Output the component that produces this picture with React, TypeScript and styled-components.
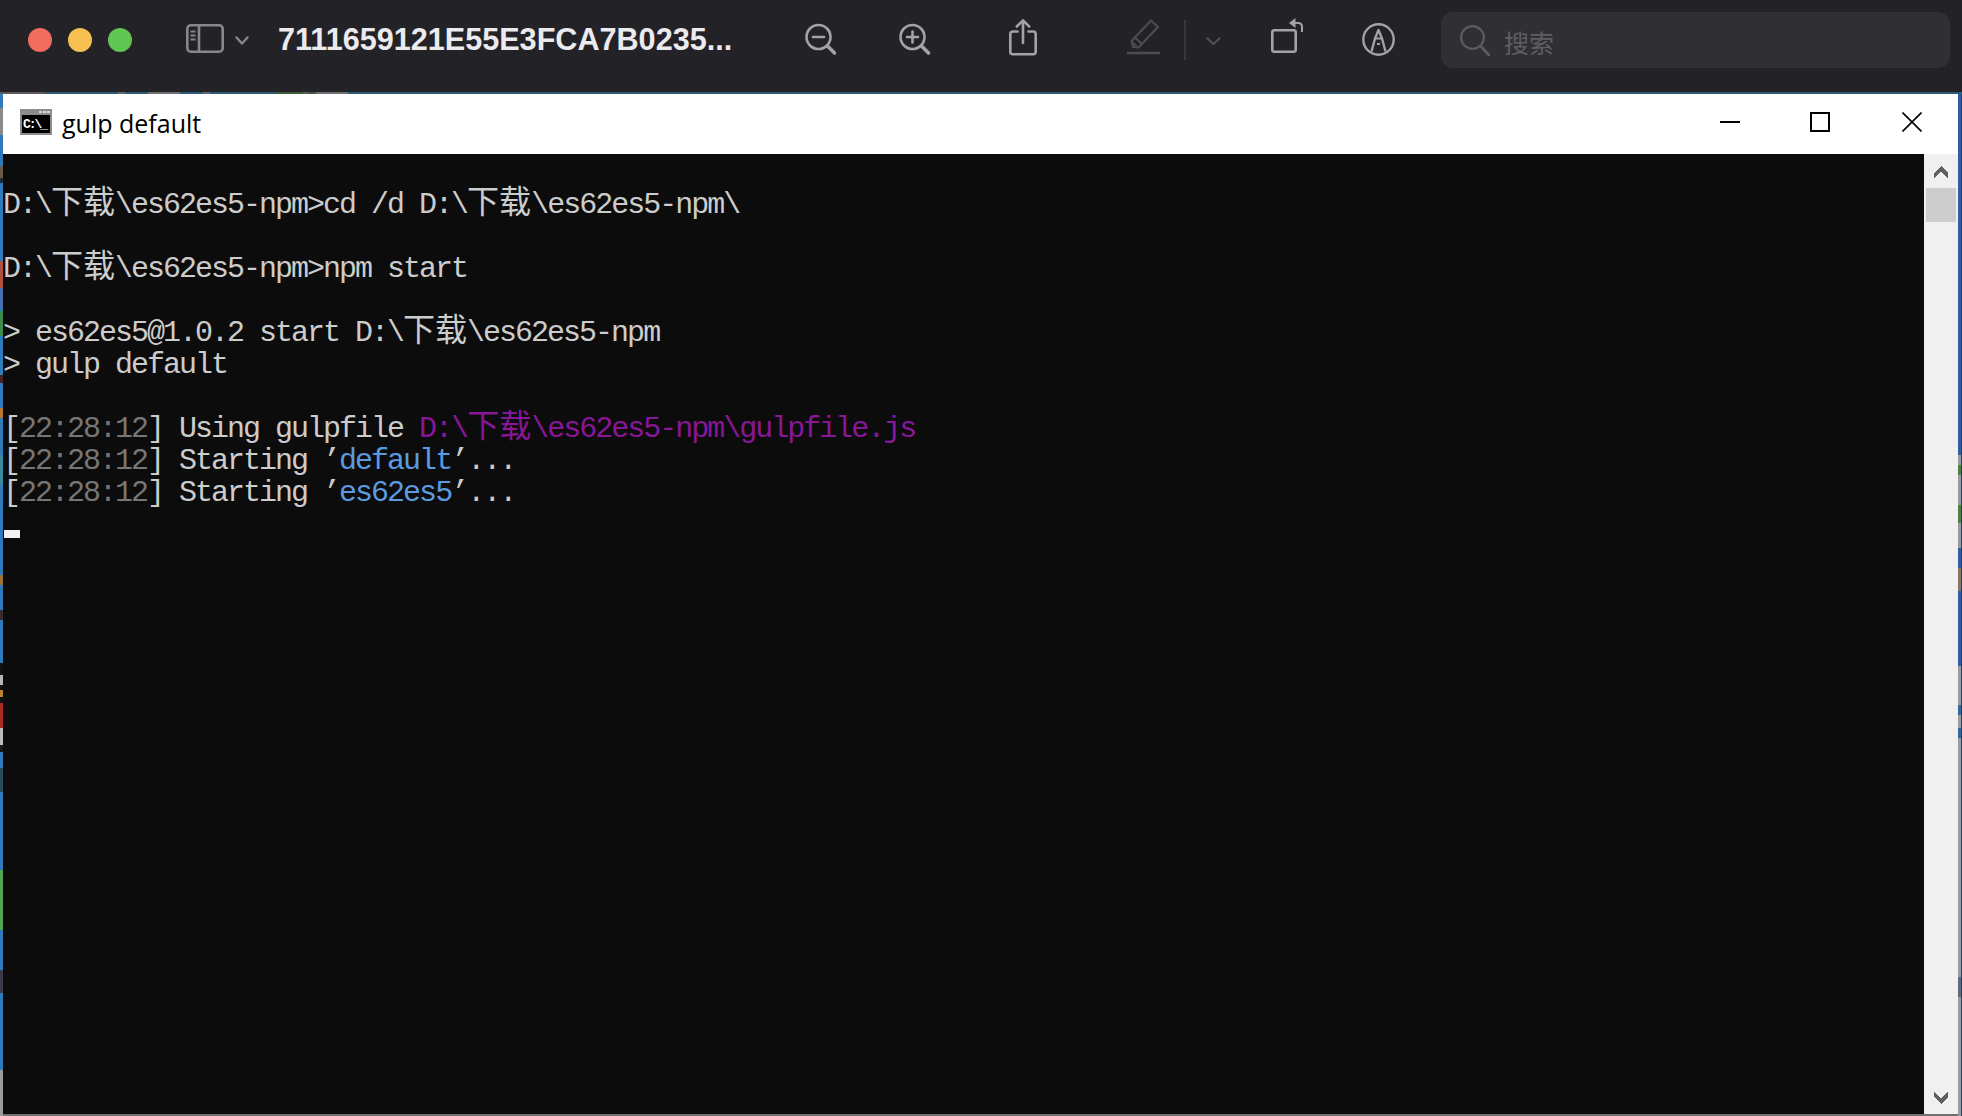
import React from "react";
import styled, { createGlobalStyle } from "styled-components";

type Band = [number, number, string];

const bands = (direction: string, base: string, items: Band[], origin: number, end: number): string => {
  const stops: string[] = [];
  let cursor = 0;
  items.forEach(([from, to, color]) => {
    const a = from - origin;
    const b = to - origin;
    stops.push(`${base} ${cursor}px`, `${base} ${a}px`, `${color} ${a}px`, `${color} ${b}px`);
    cursor = b;
  });
  stops.push(`${base} ${cursor}px`, `${base} ${end - origin}px`);
  return `linear-gradient(${direction}, ${stops.join(", ")})`;
};

const leftStrip = bands("to bottom", "#2f7ab8", [
  [108, 135, "#8a8a8a"], [166, 178, "#6b5a45"], [178, 183, "#1c2a3a"],
  [261, 288, "#b0503c"], [288, 308, "#4a6fb0"], [311, 336, "#3f8a4a"],
  [375, 383, "#4a1f28"], [408, 418, "#b8772a"], [455, 485, "#3a8aa0"],
  [575, 585, "#a0702f"], [610, 620, "#3a2a30"], [663, 675, "#121212"],
  [675, 685, "#b5b5b5"], [685, 690, "#111111"], [690, 697, "#b8862a"],
  [697, 703, "#111111"], [703, 728, "#a82a24"], [728, 745, "#bbbbbb"],
  [745, 752, "#1a1a1a"], [768, 792, "#2a4a60"], [870, 930, "#55a552"],
  [970, 993, "#3a3a4a"], [1070, 1116, "#9a9a9a"],
], 92, 1116);

const rightStrip = bands("to bottom", "#2f5f9f", [
  [455, 465, "#9a9a9a"], [465, 475, "#4f8040"], [475, 505, "#9a9a9a"],
  [505, 523, "#4f8040"], [523, 548, "#9a9a9a"], [568, 591, "#8a7460"],
  [666, 705, "#9c9c9c"], [705, 715, "#33689a"], [715, 728, "#9c9c9c"],
  [728, 738, "#33689a"], [738, 977, "#9c9c9c"], [977, 997, "#5f6a7a"],
  [997, 1116, "#9c9c9c"],
], 92, 1116);

const topBand = bands("to right", "#2c5a78", [
  [0, 45, "#5a5a5a"], [118, 125, "#6a6a6a"], [148, 180, "#6f6f6f"],
  [203, 210, "#6a6a6a"], [275, 303, "#3f5a3a"], [303, 308, "#5f5f5f"],
  [308, 316, "#3f5a3a"], [316, 348, "#6f6f6f"],
], 0, 1962);

const GlobalStyle = createGlobalStyle`
  html, body { margin: 0; padding: 0; background: #232227; }
  body { width: 1962px; height: 1116px; overflow: hidden; }
`;

const Page = styled.div`
  width: 1962px;
  height: 1116px;
  display: flex;
  flex-direction: column;
  overflow: hidden;
`;

const Toolbar = styled.header`
  height: 92px;
  flex: none;
  display: flex;
  align-items: flex-start;
  padding-left: 28px;
  background: #232227;
`;

const Lights = styled.div`
  display: flex;
  gap: 16px;
  margin-top: 28px;
`;

const Light = styled.span<{ $color: string }>`
  width: 24px;
  height: 24px;
  border-radius: 50%;
  background: ${(p) => p.$color};
`;

const Tool = styled.span<{ $left: number; $top: number }>`
  display: block;
  flex: none;
  line-height: 0;
  margin: ${(p) => p.$top}px 0 0 ${(p) => p.$left}px;
  svg { display: block; overflow: visible; }
`;

const DocTitle = styled.h1`
  width: 454px;
  flex: none;
  margin: 22px 0 0 29px;
  font: 700 30.6px/34px "Liberation Sans", Arial, sans-serif;
  color: #ebeaee;
  white-space: nowrap;
`;

const ToolDivider = styled.span`
  flex: none;
  width: 2px;
  height: 40px;
  margin: 20px 0 0 24px;
  background: #38373b;
`;

const SearchBox = styled.div`
  flex: none;
  width: 509px;
  height: 56px;
  margin: 12px 0 0 46px;
  padding-left: 19px;
  box-sizing: border-box;
  display: flex;
  align-items: center;
  gap: 14px;
  border-radius: 12px;
  background: #302f34;
`;

const SearchHint = styled.span`
  font: 400 25px/30px "Noto Sans CJK SC", sans-serif;
  color: #5f5e62;
  margin-top: 3px;
`;

const Desktop = styled.main`
  flex: 1;
  min-height: 0;
  display: flex;
  padding: 2px 4px 0 3px;
  background:
    linear-gradient(to right, #1f3f66 1px, transparent 1px) right -3px top 2px / 4px 100% no-repeat,
    ${topBand} 0 0 / 100% 2px no-repeat,
    ${leftStrip} 0 0 / 3px 100% no-repeat,
    ${rightStrip} 100% 0 / 4px 100% no-repeat,
    #2f7ab8;
`;

const Window = styled.section`
  flex: 1;
  min-width: 0;
  display: flex;
  flex-direction: column;
  border-bottom: 2px solid #707070;
`;

const TitleBar = styled.div`
  height: 60px;
  flex: none;
  display: flex;
  align-items: center;
  padding: 0 36px 0 17px;
  background: #ffffff;
`;

const WindowName = styled.span`
  margin: -2px 0 0 10px;
  font: 400 25px/32px "Open Sans", "Noto Sans", sans-serif;
  color: #000000;
`;

const WindowControls = styled.div`
  margin-left: auto;
  display: flex;
  align-items: center;
  gap: 70px;
  margin-top: -4px;
`;

const MinimizeGlyph = styled.span`
  width: 20px;
  height: 2px;
  background: #000000;
`;

const MaximizeGlyph = styled.span`
  width: 20px;
  height: 20px;
  box-sizing: border-box;
  border: 2px solid #000000;
`;

const CloseGlyph = styled.svg`
  display: block;
  margin-left: 2px;
`;

const ConsoleBody = styled.div`
  flex: 1;
  min-height: 0;
  display: flex;
`;

const Terminal = styled.pre`
  flex: 1;
  min-width: 0;
  margin: 0;
  overflow: hidden;
  background: #0c0c0c;
  color: #cccccc;
  font: 400 30px/38px "Liberation Mono", "Courier New", monospace;
  letter-spacing: -2px;
`;

const Row = styled.div`
  height: 32px;
  white-space: pre;
`;

const Tone = styled.span<{ $color: string }>`
  color: ${(p) => p.$color};
`;

const Wide = styled.span`
  font: 400 32px/0 "Noto Sans CJK SC", sans-serif;
  letter-spacing: 0;
`;

const Cursor = styled.span`
  display: block;
  width: 16px;
  height: 8px;
  margin: 24px 0 0 1px;
  background: #f2f2f2;
`;

const ScrollTrack = styled.aside`
  flex: none;
  width: 34px;
  box-sizing: border-box;
  padding: 12px 0 10px;
  display: flex;
  flex-direction: column;
  align-items: center;
  background: #f0f0f0;
`;

const ScrollThumb = styled.div`
  width: 30px;
  height: 34px;
  margin-top: 10px;
  background: #cdcdcd;
`;

const ScrollDown = styled.svg`
  display: block;
  margin-top: auto;
`;

const ScrollUp = styled.svg`
  display: block;
`;

const CmdIcon = styled.svg`
  display: block;
  flex: none;
  margin-top: -4px;
`;

const CmdLabel = styled.text`
  font: 700 13px "Liberation Mono", monospace;
  fill: #ffffff;
`;

const GRAY = "#767676";
const PURPLE = "#881798";
const BLUE = "#5a9be0";

const Text = ({ value }: { value: string }) => (
  <>
    {value.split(/(下载)/).map((part, i) =>
      part === "下载" ? <Wide key={i}>{part}</Wide> : <React.Fragment key={i}>{part}</React.Fragment>
    )}
  </>
);

const Stamp = () => (
  <>
    [<Tone $color={GRAY}>22:28:12</Tone>]
  </>
);

const Icon = "#a3a2a6";
const Dim = "#4d4c50";

const App = () => (
  <Page>
    <GlobalStyle />
    <Toolbar>
      <Lights>
        <Light $color="#f26d5f" />
        <Light $color="#f6bf4f" />
        <Light $color="#61c554" />
      </Lights>
      <Tool $left={54} $top={24}>
        <svg width="38" height="29" viewBox="0 0 38 29" fill="none" stroke="#88878b" strokeWidth="2.6">
          <rect x="1.3" y="1.3" width="35.4" height="26.4" rx="3.5" />
          <path d="M13 1.3v26.4" />
          <path d="M4.5 7.5h5M4.5 11.5h5M4.5 15.5h5" strokeWidth="2" />
        </svg>
      </Tool>
      <Tool $left={11} $top={36}>
        <svg width="14" height="9" viewBox="0 0 14 9" fill="none" stroke="#88878b" strokeWidth="2.4" strokeLinecap="round" strokeLinejoin="round">
          <path d="M1.5 1.5 7 7.5l5.5-6" />
        </svg>
      </Tool>
      <DocTitle>7111659121E55E3FCA7B0235...</DocTitle>
      <Tool $left={73} $top={24}>
        <svg width="31" height="30" viewBox="0 0 31 30" fill="none" stroke={Icon} strokeWidth="2.6" strokeLinecap="round">
          <circle cx="13.5" cy="13" r="12" />
          <path d="M8 13h11" />
          <path d="M22.5 22 29.5 29" strokeWidth="3.6" />
        </svg>
      </Tool>
      <Tool $left={63} $top={24}>
        <svg width="31" height="30" viewBox="0 0 31 30" fill="none" stroke={Icon} strokeWidth="2.6" strokeLinecap="round">
          <circle cx="13.5" cy="13" r="12" />
          <path d="M8 13h11M13.5 7.5v11" />
          <path d="M22.5 22 29.5 29" strokeWidth="3.6" />
        </svg>
      </Tool>
      <Tool $left={79} $top={19}>
        <svg width="28" height="36" viewBox="0 0 28 36" fill="none" stroke={Icon} strokeWidth="2.6" strokeLinecap="round" strokeLinejoin="round">
          <path d="M8.5 12.5H3.8a2.5 2.5 0 0 0-2.5 2.5v17.7a2.5 2.5 0 0 0 2.5 2.5h20.4a2.5 2.5 0 0 0 2.5-2.5V15a2.5 2.5 0 0 0-2.5-2.5h-4.7" />
          <path d="M14 24V1.6M7.8 7.5 14 1.4l6.2 6.1" />
        </svg>
      </Tool>
      <Tool $left={90} $top={19}>
        <svg width="33" height="35" viewBox="0 0 33 35" fill="none" stroke={Dim} strokeWidth="2.2" strokeLinejoin="round">
          <path d="M6 28 4.5 22 24 1.5 31 8 11.5 28.5Z" />
          <path d="M7.5 18 15 25M5 23l4.5 4" />
          <path d="M0 34h33" strokeWidth="2.6" />
        </svg>
      </Tool>
      <ToolDivider />
      <Tool $left={20} $top={37}>
        <svg width="15" height="8" viewBox="0 0 15 8" fill="none" stroke={Dim} strokeWidth="2.4" strokeLinecap="round" strokeLinejoin="round">
          <path d="M1.5 1.3 7.5 7l6-5.7" />
        </svg>
      </Tool>
      <Tool $left={50} $top={17}>
        <svg width="32" height="36" viewBox="0 0 32 36" fill="none" stroke={Icon} strokeWidth="2.6" strokeLinejoin="round">
          <rect x="1.3" y="13.3" width="23.4" height="21.4" rx="2" />
          <path d="M31 15V9.5a3.5 3.5 0 0 0-3.5-3.5H23" strokeWidth="2" />
          <path d="M24.5 1 18 6l6.5 5Z" fill={Icon} stroke="none" />
        </svg>
      </Tool>
      <Tool $left={59} $top={23}>
        <svg width="33" height="33" viewBox="0 0 33 33" fill="none" stroke={Icon} strokeWidth="2.4" strokeLinejoin="round">
          <circle cx="16.5" cy="16.5" r="15.2" />
          <path d="M9.5 28.5 13 15.5 16.5 7l3.5 8.5 3.5 13" />
          <path d="M13 15.5h7M15 21h3" strokeWidth="2" />
        </svg>
      </Tool>
      <SearchBox>
        <svg width="30" height="31" viewBox="0 0 30 31" fill="none" stroke="#5c5b5f" strokeWidth="2.2" strokeLinecap="round">
          <circle cx="12.5" cy="12.5" r="11.4" />
          <path d="M21 21.5 29 30" strokeWidth="2.8" />
        </svg>
        <SearchHint>搜索</SearchHint>
      </SearchBox>
    </Toolbar>
    <Desktop>
      <Window>
        <TitleBar>
          <CmdIcon width="32" height="26" viewBox="0 0 32 26" shapeRendering="crispEdges">
            <rect width="32" height="26" fill="#8c8c8c" />
            <rect x="2" y="6" width="28" height="18" fill="#000000" />
            <rect x="19" y="2" width="3" height="2" fill="#d8d8d8" />
            <rect x="23" y="2" width="3" height="2" fill="#d8d8d8" />
            <rect x="27" y="2" width="3" height="2" fill="#d8d8d8" />
            <CmdLabel x="3" y="19" textLength="25">C:\_</CmdLabel>
          </CmdIcon>
          <WindowName>gulp default</WindowName>
          <WindowControls>
            <MinimizeGlyph />
            <MaximizeGlyph />
            <CloseGlyph width="20" height="20" viewBox="0 0 20 20" stroke="#000000" strokeWidth="1.6">
              <path d="M0.5 0.5 19.5 19.5M19.5 0.5 0.5 19.5" />
            </CloseGlyph>
          </WindowControls>
        </TitleBar>
        <ConsoleBody>
          <Terminal>
            <Row />
            <Row><Text value={"D:\\下载\\es62es5-npm>cd /d D:\\下载\\es62es5-npm\\"} /></Row>
            <Row />
            <Row><Text value={"D:\\下载\\es62es5-npm>npm start"} /></Row>
            <Row />
            <Row><Text value={"> es62es5@1.0.2 start D:\\下载\\es62es5-npm"} /></Row>
            <Row>{"> gulp default"}</Row>
            <Row />
            <Row>
              <Stamp /> Using gulpfile <Tone $color={PURPLE}><Text value={"D:\\下载\\es62es5-npm\\gulpfile.js"} /></Tone>
            </Row>
            <Row>
              <Stamp /> Starting ’<Tone $color={BLUE}>default</Tone>’...
            </Row>
            <Row>
              <Stamp /> Starting ’<Tone $color={BLUE}>es62es5</Tone>’...
            </Row>
            <Row><Cursor /></Row>
          </Terminal>
          <ScrollTrack>
            <ScrollUp width="14" height="12" viewBox="0 0 14 12" fill="#606060" shapeRendering="crispEdges">
              <path d="M7 0 14 7V12L7 6 0 12V7Z" />
            </ScrollUp>
            <ScrollThumb />
            <ScrollDown width="14" height="12" viewBox="0 0 14 12" fill="#606060" shapeRendering="crispEdges">
              <path d="M7 12 14 5V0L7 6 0 0V5Z" />
            </ScrollDown>
          </ScrollTrack>
        </ConsoleBody>
      </Window>
    </Desktop>
  </Page>
);

export default App;
